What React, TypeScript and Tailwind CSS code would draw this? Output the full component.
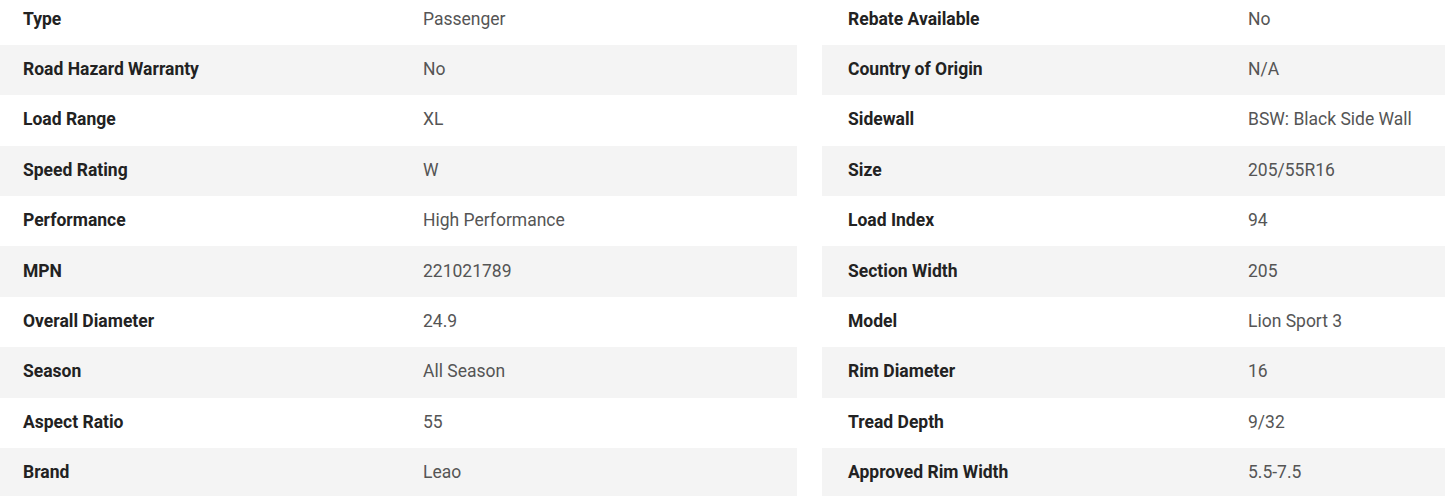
import React from 'react';

const leftSpecs = [
  ['Type', 'Passenger'],
  ['Road Hazard Warranty', 'No'],
  ['Load Range', 'XL'],
  ['Speed Rating', 'W'],
  ['Performance', 'High Performance'],
  ['MPN', '221021789'],
  ['Overall Diameter', '24.9'],
  ['Season', 'All Season'],
  ['Aspect Ratio', '55'],
  ['Brand', 'Leao'],
];

const rightSpecs = [
  ['Rebate Available', 'No'],
  ['Country of Origin', 'N/A'],
  ['Sidewall', 'BSW: Black Side Wall'],
  ['Size', '205/55R16'],
  ['Load Index', '94'],
  ['Section Width', '205'],
  ['Model', 'Lion Sport 3'],
  ['Rim Diameter', '16'],
  ['Tread Depth', '9/32'],
  ['Approved Rim Width', '5.5-7.5'],
];

const SpecTable = ({ rows, labelWidth, pad }: { rows: string[][]; labelWidth: string; pad: string }) => (
  <table className="w-full border-collapse">
    <tbody>
      {rows.map(([label, value], i) => (
        <tr key={label} className={i % 2 === 1 ? 'bg-[#f4f4f4]' : 'bg-white'}>
          <td className={`h-[50.375px] ${labelWidth} ${pad} pt-0 pr-0 pb-[2px] font-bold text-[#222]`}>{label}</td>
          <td className="h-[50.375px] p-0 pb-[2px] text-[#555]">{value}</td>
        </tr>
      ))}
    </tbody>
  </table>
);

export default function App() {
  return (
    <div className="bg-white w-[1445px] h-[496px] overflow-hidden font-['Roboto',sans-serif] text-[17.5px]">
      <div className="flex gap-[25px] -mt-[5.4px]">
        <div className="w-[797px] shrink-0">
          <SpecTable rows={leftSpecs} labelWidth="w-[423px]" pad="pl-[23px]" />
        </div>
        <div className="flex-1">
          <SpecTable rows={rightSpecs} labelWidth="w-[426px]" pad="pl-[26px]" />
        </div>
      </div>
    </div>
  );
}
